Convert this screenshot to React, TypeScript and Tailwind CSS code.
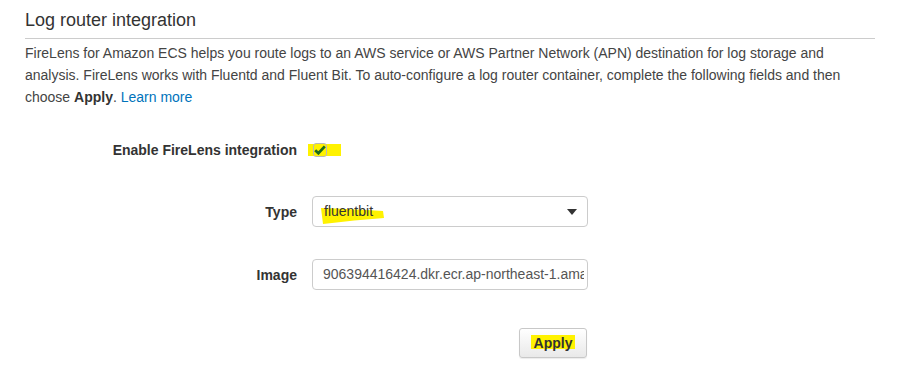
import React from "react";

const font = { fontFamily: '"Liberation Sans", Arial, sans-serif' };

// yellow highlighter mark behind a piece of text
const Marker = ({ className }: { className: string }) => (
  <span className={`absolute bg-[#fff200] ${className}`} />
);

const FormRow = ({ label, children }: { label: string; children: React.ReactNode }) => (
  <div className="flex items-center">
    <div className="w-[272px] text-right text-[14px] font-bold leading-[22px] text-[#333]">
      {label}
    </div>
    <div className="ml-[15px]">{children}</div>
  </div>
);

export default function App() {
  return (
    <div className="min-h-[388px] w-[914px] bg-white pl-[25px] pt-[8px]" style={font}>
      <div className="w-[850px]">
        <h2 className="border-b border-[#cccccc] pb-[6px] text-[18px] font-normal leading-[24px] text-[#333]">
          Log router integration
        </h2>
        <p className="mt-[3px] text-[14px] leading-[22px] text-[#444]">
          FireLens for Amazon ECS helps you route logs to an AWS service or AWS Partner Network (APN)
          destination for log storage and analysis. FireLens works with Fluentd and Fluent Bit. To
          auto-configure a log router container, complete the following fields and then choose{" "}
          <strong className="text-[#333]">Apply</strong>.{" "}
          <a className="text-[#0073bb]">Learn more</a>
        </p>

        <div className="mt-[31px]">
          <FormRow label="Enable FireLens integration">
            <div className="relative flex h-[22px] w-[34px] items-center">
              <Marker className="left-[-4px] top-[5px] h-[12px] w-[33px]" />
              <div className="relative ml-[1px] flex h-[14px] w-[14px] items-center justify-center rounded-[3px] border border-[#b8b8b8]">
                <svg width="12" height="10" viewBox="0 0 12 10">
                  <path d="M1.2 5.2 L4.4 8.2 L10.8 1.4" fill="none" stroke="#1a6b1a" strokeWidth="2.8" />
                </svg>
              </div>
            </div>
          </FormRow>
        </div>

        <div className="mt-[35px]">
          <FormRow label="Type">
            <div className="relative flex h-[31px] w-[276px] items-center rounded-[4px] border border-[#cccccc] bg-white pl-[11px] pr-[10px]">
              <svg className="absolute left-[7px] top-[10px]" width="65" height="18" viewBox="0 0 65 18">
                <path d="M1 1 Q30 2 63 4 L64 11 Q35 13 3 17 Z" fill="#fff200" />
              </svg>
              <span className="relative flex-1 text-[14px] text-[#333]">fluentbit</span>
              <svg width="10" height="6" viewBox="0 0 10 6">
                <path d="M0 0 L10 0 L5 6 Z" fill="#333" />
              </svg>
            </div>
          </FormRow>
        </div>

        <div className="mt-[32px]">
          <FormRow label="Image">
            <div className="h-[31px] w-[276px] overflow-hidden rounded-[4px] border border-[#cccccc] bg-white pl-[10px] pr-[3px]">
              <div className="overflow-hidden whitespace-nowrap text-[14px] leading-[29px] text-[#555]">
                906394416424.dkr.ecr.ap-northeast-1.amazonaws.com/aws-for-fluent-bit:latest
              </div>
            </div>
          </FormRow>
        </div>

        <div className="mt-[38px] flex">
          <div className="ml-[494px] flex h-[30px] w-[68px] items-center justify-center rounded-[3px] border border-[#c8c8c8] bg-gradient-to-b from-white to-[#e9e9e9] shadow-[0_1px_1px_rgba(0,0,0,0.08)]">
            <span className="relative text-[14px] font-bold text-[#333]">
              <Marker className="left-[-3px] top-[2px] h-[14px] w-[44px]" />
              <span className="relative">Apply</span>
            </span>
          </div>
        </div>
      </div>
    </div>
  );
}
